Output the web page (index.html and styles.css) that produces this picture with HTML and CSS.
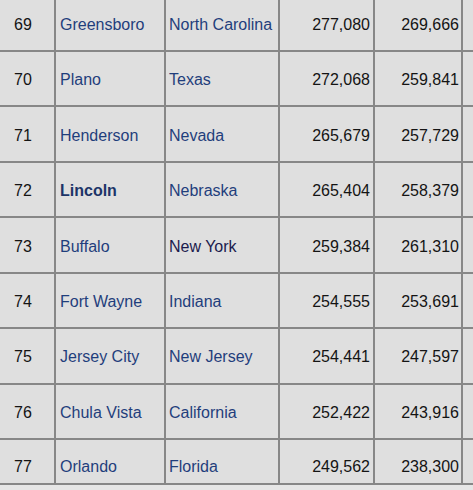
FILE: index.html
```html
<!DOCTYPE html>
<html>
<head>
<meta charset="utf-8">
<link rel="stylesheet" href="styles.css">
</head>
<body>
<div class="table">
  <div class="c rank">69</div><div class="c"><a class="lnk">Greensboro</a></div><div class="c"><a class="lnk">North Carolina</a></div><div class="c num">277,080</div><div class="c num">269,666</div><div class="c"></div>
  <div class="c rank">70</div><div class="c"><a class="lnk">Plano</a></div><div class="c"><a class="lnk">Texas</a></div><div class="c num">272,068</div><div class="c num">259,841</div><div class="c"></div>
  <div class="c rank">71</div><div class="c"><a class="lnk">Henderson</a></div><div class="c"><a class="lnk">Nevada</a></div><div class="c num">265,679</div><div class="c num">257,729</div><div class="c"></div>
  <div class="c rank">72</div><div class="c"><a class="lnk bold">Lincoln</a></div><div class="c"><a class="lnk">Nebraska</a></div><div class="c num">265,404</div><div class="c num">258,379</div><div class="c"></div>
  <div class="c rank">73</div><div class="c"><a class="lnk">Buffalo</a></div><div class="c"><a class="lnk visited">New York</a></div><div class="c num">259,384</div><div class="c num">261,310</div><div class="c"></div>
  <div class="c rank">74</div><div class="c"><a class="lnk">Fort Wayne</a></div><div class="c"><a class="lnk">Indiana</a></div><div class="c num">254,555</div><div class="c num">253,691</div><div class="c"></div>
  <div class="c rank">75</div><div class="c"><a class="lnk">Jersey City</a></div><div class="c"><a class="lnk">New Jersey</a></div><div class="c num">254,441</div><div class="c num">247,597</div><div class="c"></div>
  <div class="c rank">76</div><div class="c"><a class="lnk">Chula Vista</a></div><div class="c"><a class="lnk">California</a></div><div class="c num">252,422</div><div class="c num">243,916</div><div class="c"></div>
  <div class="c rank last">77</div><div class="c last"><a class="lnk">Orlando</a></div><div class="c last"><a class="lnk">Florida</a></div><div class="c num last">249,562</div><div class="c num last">238,300</div><div class="c last"></div>
</div>
</body>
</html>
```
FILE: styles.css
```css
html, body {
  margin: 0;
  padding: 0;
  background: #e6e6e6;
  overflow: hidden;
}
body {
  width: 473px;
  height: 490px;
  font-family: "Liberation Sans", Arial, sans-serif;
  font-size: 16px;
}
.table {
  display: grid;
  grid-template-columns: 54px 108px 112px 93px 86px 10px;
  grid-template-rows: repeat(8, 53.43px) 43px;
  gap: 2px;
  background: #878787;
  padding-bottom: 2px;
  margin-top: -3.4px;
  width: 473px;
}
.c {
  background: #dfdfdf;
  display: flex;
  align-items: center;
  padding: 3px 3px 0 4px;
  color: #141414;
  white-space: nowrap;
  overflow: hidden;
}
.c:nth-child(6n+3) {
  padding-left: 3px;
}
.rank {
  padding-left: 14px;
}
.num {
  justify-content: flex-end;
  padding-right: 3px;
}
.c:nth-child(6n+5) {
  padding-right: 2px;
}
.last {
  padding-top: 11px;
}
.lnk {
  color: #1f3e7c;
  text-decoration: none;
}
.bold {
  font-weight: bold;
  color: #1c3468;
}
.visited {
  color: #1b1b4e;
}
```
